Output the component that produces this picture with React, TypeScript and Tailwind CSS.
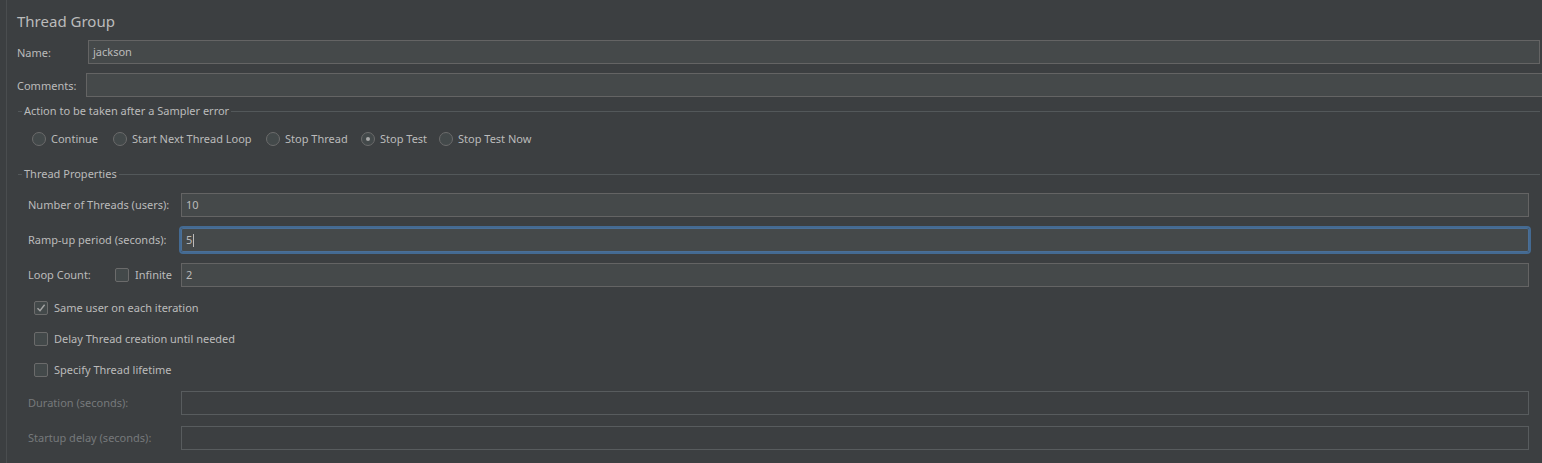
import React from 'react';

const radios = [
  { label: 'Continue', w: 'w-[81px]', checked: false },
  { label: 'Start Next Thread Loop', w: 'w-[153px]', checked: false },
  { label: 'Stop Thread', w: 'w-[95px]', checked: false },
  { label: 'Stop Test', w: 'w-[78px]', checked: true },
  { label: 'Stop Test Now', w: 'w-[110px]', checked: false },
];

const Radio = ({ checked }: { checked: boolean }) => (
  <span className="w-[14px] h-[14px] shrink-0 rounded-full border border-[#6b6b6b] bg-[#43494a] flex items-center justify-center">
    {checked && <span className="w-[4px] h-[4px] rounded-full bg-[#a9a9a9]" />}
  </span>
);

const Checkbox = ({ checked }: { checked?: boolean }) => (
  <span className="w-[14px] h-[14px] shrink-0 rounded-[2px] border border-[#6b6b6b] bg-[#43494a] flex items-center justify-center">
    {checked && (
      <svg width="10" height="10" viewBox="0 0 10 10">
        <path d="M1.5 5.2 L4 7.8 L8.6 1.8" fill="none" stroke="#a4a4a4" strokeWidth="1.4" />
      </svg>
    )}
  </span>
);

const SectionHeader = ({ title }: { title: string }) => (
  <div className="flex items-center h-[14px] ml-[1px] mr-[2px]">
    <span className="w-[4px] h-px bg-[#53585a]" />
    <span className="px-[2px] leading-[14px]">{title}</span>
    <span className="flex-1 h-px bg-[#53585a]" />
  </div>
);

const Field = ({ value, disabled }: { value?: string; disabled?: boolean }) => (
  <div
    className={`flex-1 h-[24px] flex items-center px-[4px] pt-px border ${
      disabled ? 'border-[#585c5e] bg-[#3c3f41]' : 'border-[#646464] bg-[#45494a] text-[#bbbbbb]'
    }`}
  >
    {value}
  </div>
);

export default function App() {
  return (
    <div className="w-[1542px] h-[463px] bg-[#3c3f41] text-[#bbbbbb] text-[11px] font-['Noto_Sans',sans-serif] overflow-hidden flex">
      <div className="w-[6px]" />
      <div className="w-px bg-[#4a4d4f]" />
      <div className="flex-1 pl-[10px] flex flex-col">
        {/* Title */}
        <div className="pt-[10px] text-[15px] leading-[22px] mb-[8px]">Thread Group</div>

        <div className="flex items-center mr-[2px]">
          <span className="w-[71px] pt-[2px]">Name:</span>
          <Field value="jackson" />
        </div>
        <div className="flex items-center mt-[9px] -mr-[1px]">
          <span className="w-[69px] pt-[2px]">Comments:</span>
          <Field />
        </div>

        {/* Sampler error */}
        <div className="mt-[7px]">
          <SectionHeader title="Action to be taken after a Sampler error" />
        </div>
        <div className="flex items-center h-[20px] mt-[11px] pl-[15px]">
          {radios.map((r) => (
            <div key={r.label} className={`${r.w} flex items-center gap-[5px] shrink-0`}>
              <Radio checked={r.checked} />
              <span className="whitespace-nowrap pt-px">{r.label}</span>
            </div>
          ))}
        </div>

        {/* Thread properties */}
        <div className="mt-[18px]">
          <SectionHeader title="Thread Properties" />
        </div>
        <div className="pl-[11px] mr-[13px] flex flex-col">
          <div className="flex items-center mt-[12px]">
            <span className="w-[153px] whitespace-nowrap pt-px">Number of Threads (users):</span>
            <Field value="10" />
          </div>
          <div className="flex items-center mt-[11px]">
            <span className="w-[153px] whitespace-nowrap pt-px">Ramp-up period (seconds):</span>
            <div className="flex-1 h-[24px] flex items-center px-[4px] pt-px border border-[#4a6f97] bg-[#45494a] rounded-[2px] outline-2 outline-solid outline-[#446a92] outline-offset-0">
              5<span className="w-px h-[13px] bg-[#bbbbbb] ml-px" />
            </div>
          </div>
          <div className="flex items-center mt-[11px]">
            <span className="w-[87px] whitespace-nowrap pt-px">Loop Count:</span>
            <div className="w-[66px] flex items-center gap-[6px]">
              <Checkbox />
              <span className="pt-px">Infinite</span>
            </div>
            <Field value="2" />
          </div>

          <div className="flex flex-col pl-[6px]">
            <div className="flex items-center gap-[6px] h-[20px] mt-[11px]">
              <Checkbox checked />
              <span className="pt-px">Same user on each iteration</span>
            </div>
            <div className="flex items-center gap-[6px] h-[20px] mt-[11px]">
              <Checkbox />
              <span className="pt-px">Delay Thread creation until needed</span>
            </div>
            <div className="flex items-center gap-[6px] h-[20px] mt-[11px]">
              <Checkbox />
              <span className="pt-px">Specify Thread lifetime</span>
            </div>
          </div>

          <div className="flex items-center mt-[11px] text-[#76797b]">
            <span className="w-[153px] whitespace-nowrap pt-px">Duration (seconds):</span>
            <Field disabled />
          </div>
          <div className="flex items-center mt-[11px] text-[#76797b]">
            <span className="w-[153px] whitespace-nowrap pt-px">Startup delay (seconds):</span>
            <Field disabled />
          </div>
        </div>
      </div>
    </div>
  );
}
